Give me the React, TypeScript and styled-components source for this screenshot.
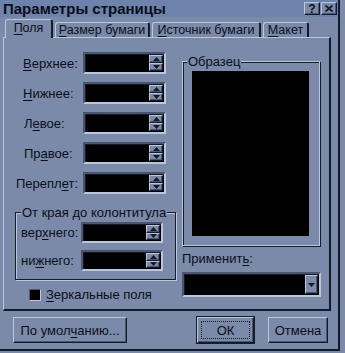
import React from "react";
import styled, { createGlobalStyle, css } from "styled-components";

const C = {
  face: "#7b8aa8",
  light: "#bac7dd",
  dark: "#141a28",
  shadow: "#4a5670",
  title: "#6d83ab",
  text: "#0a0e18",
};

const Global = createGlobalStyle`
  html, body { margin: 0; padding: 0; background: ${C.face}; }
  body {
    font-family: "Liberation Sans", Arial, sans-serif;
    font-size: 13px;
    color: ${C.text};
  }
  * { box-sizing: border-box; }
`;

const raised = css`
  border-style: solid;
  border-width: 1px;
  border-color: ${C.light} ${C.dark} ${C.dark} ${C.light};
  box-shadow: inset -1px -1px 0 ${C.shadow};
`;

const sunken = css`
  border-style: solid;
  border-width: 2px;
  border-color: ${C.shadow} ${C.light} ${C.light} ${C.shadow};
  box-shadow: inset 1px 1px 0 ${C.dark};
`;

const Window = styled.div`
  width: 340px;
  height: 351px;
  border-right: 2px solid ${C.dark};
  border-bottom: 2px solid ${C.dark};
  display: flex;
  flex-direction: column;
  background: ${C.face};
`;

const TitleBar = styled.div`
  height: 17px;
  background: ${C.title};
  display: flex;
  align-items: center;
  justify-content: space-between;
  padding: 0 1px 0 3px;
`;

const TitleText = styled.span`
  font-weight: bold;
  font-size: 15px;
  line-height: 17px;
  color: ${C.text};
`;

const CaptionButtons = styled.div`
  display: flex;
  gap: 1px;
`;

const CapBtn = styled.div`
  width: 16px;
  height: 13px;
  ${raised};
  background: ${C.face};
  display: flex;
  align-items: center;
  justify-content: center;
  font-weight: bold;
  font-size: 12px;
  line-height: 1;
`;

const Body = styled.div`
  flex: 1;
  display: flex;
  flex-direction: column;
  padding: 2px 0 0 3px;
`;

const Tabs = styled.div`
  display: flex;
  align-items: flex-end;
  height: 18px;
  padding-left: 2px;
  position: relative;
  z-index: 1;
  font-size: 12.5px;
`;

const Tab = styled.div<{ $w: number; $active?: boolean }>`
  width: ${(p) => p.$w}px;
  height: ${(p) => (p.$active ? 19 : 15)}px;
  margin-bottom: ${(p) => (p.$active ? -1 : 0)}px;
  margin-right: 2px;
  background: ${C.face};
  border-top: 1px solid ${C.light};
  border-left: 1px solid ${C.light};
  border-right: 2px solid ${C.dark};
  border-radius: 3px 3px 0 0;
  display: flex;
  align-items: center;
  justify-content: center;
  padding-bottom: ${(p) => (p.$active ? 2 : 0)}px;
  white-space: nowrap;
`;

const Panel = styled.div`
  width: 328px;
  height: 274px;
  border-top: 1px solid ${C.light};
  border-left: 1px solid ${C.light};
  border-right: 2px solid ${C.dark};
  border-bottom: 2px solid ${C.dark};
  display: flex;
`;

const LeftCol = styled.div`
  width: 172px;
  padding-top: 14px;
  display: flex;
  flex-direction: column;
`;

const Fields = styled.div`
  display: flex;
  flex-direction: column;
  gap: 8px;
`;

const Row = styled.div`
  display: flex;
  align-items: center;
`;

const Label = styled.span<{ $w: number; $pad: number }>`
  width: ${(p) => p.$w}px;
  padding-left: ${(p) => p.$pad}px;
  white-space: nowrap;
`;

const U = styled.span`
  text-decoration: underline;
  text-underline-offset: 2px;
`;

const SpinBox = styled.div<{ $w: number; $h: number }>`
  width: ${(p) => p.$w}px;
  height: ${(p) => p.$h}px;
  ${sunken};
  background: #000;
  display: flex;
  justify-content: flex-end;
  padding: 1px;
`;

const Spinner = styled.div`
  width: 14px;
  display: flex;
  flex-direction: column;
`;

const SpinBtn = styled.div`
  flex: 1;
  background: ${C.face};
  ${raised};
  display: flex;
  align-items: center;
  justify-content: center;
`;

const Group = styled.fieldset`
  margin: 11px 0 0 11px;
  width: 157px;
  padding: 2px 8px 8px 5px;
  border: 1px solid ${C.dark};
  box-shadow: inset 1px 1px 0 ${C.light}, 1px 1px 0 ${C.light};
  display: flex;
  flex-direction: column;
  gap: 7px;
`;

const Legend = styled.legend<{ $shift?: number }>`
  padding: 0 1px;
  margin-left: ${(p) => p.$shift ?? 0}px;
  line-height: 15px;
  background: ${C.face};
  white-space: nowrap;
`;

const CheckRow = styled.div`
  display: flex;
  align-items: center;
  gap: 5px;
  margin: 7px 0 0 25px;
`;

const CheckBox = styled.div`
  width: 12px;
  height: 12px;
  background: #000;
  border: 1px solid ${C.shadow};
  border-right-color: ${C.light};
  border-bottom-color: ${C.light};
`;

const RightCol = styled.div`
  flex: 1;
  display: flex;
  flex-direction: column;
  padding-left: 6px;
`;

const SampleGroup = styled.fieldset`
  margin: 16px 0 0 0;
  width: 138px;
  padding: 2px 9px 9px 9px;
  border: 1px solid ${C.light};
  box-shadow: inset 1px 1px 0 ${C.dark}, 1px 1px 0 ${C.dark};
`;

const Preview = styled.div`
  width: 117px;
  height: 165px;
  background: #000;
`;

const ApplyLabel = styled.div`
  margin-top: 5px;
  line-height: 15px;
`;

const Combo = styled.div`
  margin-top: 6px;
  width: 139px;
  height: 25px;
  ${sunken};
  background: #000;
  display: flex;
  justify-content: flex-end;
  padding: 1px;
`;

const ComboBtn = styled.div`
  width: 13px;
  background: ${C.face};
  ${raised};
  display: flex;
  align-items: center;
  justify-content: center;
`;

const Footer = styled.div`
  display: flex;
  align-items: center;
  margin-top: 6px;
  padding: 0 10px 0 10px;
`;

const Button = styled.div<{ $w: number; $primary?: boolean }>`
  width: ${(p) => p.$w}px;
  height: 26px;
  background: ${C.face};
  ${raised};
  display: flex;
  align-items: center;
  justify-content: center;
  white-space: nowrap;
  ${(p) =>
    p.$primary &&
    css`
      outline: 1px solid ${C.dark};
      padding: 3px;
    `}
`;

const Focus = styled.span`
  flex: 1;
  align-self: stretch;
  display: flex;
  align-items: center;
  justify-content: center;
  border: 1px dotted ${C.dark};
`;

const Spacer = styled.div<{ $w?: number }>`
  flex: ${(p) => (p.$w ? `0 0 ${p.$w}px` : "1")};
`;

const Arrow = ({ up }: { up?: boolean }) => (
  <svg width="7" height="4" viewBox="0 0 7 4">
    <polygon points={up ? "0,4 7,4 3.5,0" : "0,0 7,0 3.5,4"} fill={C.dark} />
  </svg>
);

const Spin = ({ w, h }: { w: number; h: number }) => (
  <SpinBox $w={w} $h={h}>
    <Spinner>
      <SpinBtn>
        <Arrow up />
      </SpinBtn>
      <SpinBtn>
        <Arrow />
      </SpinBtn>
    </Spinner>
  </SpinBox>
);

const fields: { pre: string; u: string; post: string; pad: number }[] = [
  { pre: "", u: "В", post: "ерхнее:", pad: 19 },
  { pre: "", u: "Н", post: "ижнее:", pad: 19 },
  { pre: "Л", u: "е", post: "вое:", pad: 20 },
  { pre: "Пр", u: "а", post: "вое:", pad: 20 },
  { pre: "Перепл", u: "е", post: "т:", pad: 12 },
];

export default function App() {
  return (
    <>
      <Global />
      <Window>
        <TitleBar>
          <TitleText>Параметры страницы</TitleText>
          <CaptionButtons>
            <CapBtn>?</CapBtn>
            <CapBtn>
              <svg width="8" height="7" viewBox="0 0 8 7">
                <path d="M0.5 0.5 L7.5 6.5 M7.5 0.5 L0.5 6.5" stroke={C.dark} strokeWidth="1.8" />
              </svg>
            </CapBtn>
          </CaptionButtons>
        </TitleBar>
        <Body>
          <Tabs>
            <Tab $w={48} $active>
              <span>
                <U>П</U>оля
              </span>
            </Tab>
            <Tab $w={95}>
              <span>
                <U>Р</U>азмер бумаги
              </span>
            </Tab>
            <Tab $w={109}>
              <span>
                <U>И</U>сточник бумаги
              </span>
            </Tab>
            <Tab $w={46}>
              <span>
                <U>М</U>акет
              </span>
            </Tab>
          </Tabs>
          <Panel>
            <LeftCol>
              <Fields>
                {fields.map((f, i) => (
                  <Row key={i}>
                    <Label $w={79} $pad={f.pad}>
                      {f.pre}
                      <U>{f.u}</U>
                      {f.post}
                    </Label>
                    <Spin w={83} h={22} />
                  </Row>
                ))}
              </Fields>
              <Group>
                <Legend>От края до колонтитула</Legend>
                <Row>
                  <Label $w={60} $pad={0}>
                    вер<U>х</U>него:
                  </Label>
                  <Spin w={82} h={21} />
                </Row>
                <Row>
                  <Label $w={60} $pad={0}>
                    ни<U>ж</U>него:
                  </Label>
                  <Spin w={82} h={21} />
                </Row>
              </Group>
              <CheckRow>
                <CheckBox />
                <span>
                  <U>З</U>еркальные поля
                </span>
              </CheckRow>
            </LeftCol>
            <RightCol>
              <SampleGroup>
                <Legend $shift={-5}>Образец</Legend>
                <Preview />
              </SampleGroup>
              <ApplyLabel>
                Применит<U>ь</U>:
              </ApplyLabel>
              <Combo>
                <ComboBtn>
                  <Arrow />
                </ComboBtn>
              </Combo>
            </RightCol>
          </Panel>
          <Footer>
            <Button $w={114}>
              По умол<U>ч</U>анию...
            </Button>
            <Spacer />
            <Button $w={57} $primary>
              <Focus>ОК</Focus>
            </Button>
            <Spacer $w={14} />
            <Button $w={60}>Отмена</Button>
          </Footer>
        </Body>
      </Window>
    </>
  );
}
